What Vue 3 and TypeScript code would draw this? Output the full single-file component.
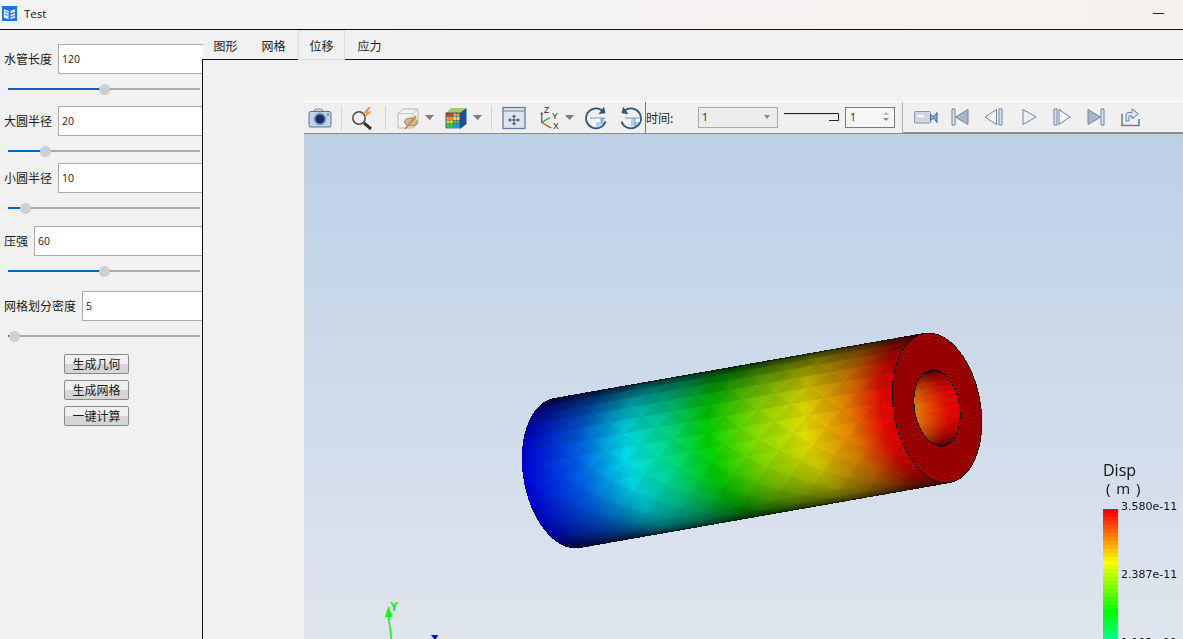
<script setup lang="ts">
import { onMounted, ref } from 'vue'

interface Field { label: string; value: string; percent: number }
type Rgb = [number, number, number]
type Vec = [number, number]

const fields: Field[] = [
  { label: '水管长度', value: '120', percent: 50 },
  { label: '大圆半径', value: '20', percent: 19.3 },
  { label: '小圆半径', value: '10', percent: 8.9 },
  { label: '压强', value: '60', percent: 50 },
  { label: '网格划分密度', value: '5', percent: 3.6 },
]
const tabs = ['图形', '网格', '位移', '应力']
const actions = ['生成几何', '生成网格', '一键计算']

const stops: [number, Rgb][] = [
  [0, [0, 0, 215]],
  [0.15, [0, 95, 230]],
  [0.28, [0, 220, 230]],
  [0.38, [0, 220, 150]],
  [0.5, [0, 210, 0]],
  [0.62, [125, 220, 0]],
  [0.76, [225, 220, 0]],
  [0.88, [230, 130, 0]],
  [0.97, [230, 10, 0]],
  [1, [230, 0, 0]],
]

function colormap(t: number): Rgb {
  for (let i = 1; i < stops.length; i++) {
    if (t <= stops[i][0]) {
      const [a, ca] = stops[i - 1]
      const [b, cb] = stops[i]
      const k = (t - a) / (b - a)
      return [0, 1, 2].map(n => ca[n] + (cb[n] - ca[n]) * k) as Rgb
    }
  }
  return stops[stops.length - 1][1]
}

// tube geometry in page coordinates, canvas sits at (304, 134)
const W = 879
const H = 505
const front: Vec = [937 - 304, 408 - 134]
const axis: Vec = [-370, 65]
const major: Vec = [-13, -75]
const minor: Vec = [43.3, -7.6]
const K = 0.1170
const detAxis = axis[0] * major[1] - axis[1] * major[0]
const detCap = major[0] * minor[1] - major[1] * minor[0]

function capRadius(x: number, y: number) {
  const dx = x - front[0]
  const dy = y - front[1]
  const a = (dx * minor[1] - dy * minor[0]) / detCap
  const b = (major[0] * dy - major[1] * dx) / detCap
  return Math.sqrt(a * a + b * b)
}

function wallColor(s: number, th: number): Rgb {
  const ns = 22
  const nt = 16
  const u = s * ns
  const v = (th / Math.PI) * nt
  const i = Math.floor(u)
  const j = Math.floor(v)
  const fu = u - i
  const fv = v - j
  // each quad is cut along one diagonal, alternating, which gives the diamond look of the mesh
  const k = (i + j) % 2 === 0 ? (fu > fv ? 0 : 1) : (fu + fv < 1 ? 0 : 1)
  const mid = ((j + 0.5) * Math.PI) / nt
  const smooth = Math.pow(Math.sin(th), 0.9)
  const flat = Math.pow(Math.sin(mid), 0.9)
  const light = 0.03 + 0.97 * (smooth * 0.6 + flat * 0.4)
  const c = colormap(Math.min(1, Math.max(0, s)))
  const f = light * (k === 0 ? 1 : 0.95)
  return [c[0] * f, c[1] * f, c[2] * f]
}

const tube = ref<HTMLCanvasElement | null>(null)

function paintTube() {
  const ctx = tube.value?.getContext('2d')
  if (!ctx) return
  const img = ctx.createImageData(W, H)
  const put = (x: number, y: number, c: Rgb) => {
    const o = (y * W + x) * 4
    img.data[o] = c[0]
    img.data[o + 1] = c[1]
    img.data[o + 2] = c[2]
    img.data[o + 3] = 255
  }
  for (let y = 150; y < H; y++) {
    for (let x = 200; x < 700; x++) {
      const px = x + 0.5
      const py = y + 0.5
      const rho = capRadius(px, py)
      const dx = px - front[0]
      const dy = py - front[1]
      const A = (dx * major[1] - dy * major[0]) / detAxis
      const B = (axis[0] * dy - axis[1] * dx) / detAxis
      if (rho <= 1) {
        const around = [capRadius(px + 1, py), capRadius(px - 1, py), capRadius(px, py + 1), capRadius(px, py - 1)]
        const edge = around.some(r => r > 1) || (rho >= 0.5 && around.some(r => r < 0.5))
        if (edge) {
          put(x, y, [0, 0, 0])
        } else if (rho >= 0.5) {
          put(x, y, [150, 0, 0])
        } else {
          const c = Math.min(1, Math.abs(B) / 0.5)
          const sin = Math.sqrt(1 - c * c)
          const th = Math.acos(Math.max(-1, Math.min(1, B / 0.5)))
          put(x, y, wallColor(Math.min(1, 1 - A - 0.5 * K * sin), th))
        }
      } else if (Math.abs(B) <= 1) {
        const sin = Math.sqrt(1 - B * B)
        const s = 1 - A + K * sin
        if (s >= 0 && s <= 1) put(x, y, wallColor(s, Math.acos(B)))
      }
    }
  }
  ctx.putImageData(img, 0, 0)
}

onMounted(paintTube)

// legend bands, top of the bar is the max value
const bands = Array.from({ length: 34 }, (_, i) => {
  const y = i * 4
  let c: Rgb
  if (y < 51) c = [255, Math.round((y / 51) * 255), 0]
  else if (y < 101) c = [Math.round((1 - (y - 51) / 50) * 255), 255, 0]
  else c = [0, 255, Math.round(((y - 101) / 50) * 255)]
  return `rgb(${c.join(',')})`
})

const cubeCells = Array.from({ length: 16 }, (_, i) => {
  const row = Math.floor(i / 4)
  const col = i % 4
  const palette = ['#e8352a', '#f09a28', '#ecdc30', '#3cc45a', '#2f8fe0']
  return { x: 2 + col * 3.5, y: 7 + row * 3.6, fill: palette[Math.min(4, row + (col > 1 ? 1 : 0))] }
})
</script>

<template>
  <div class="window">
    <header class="titlebar">
      <svg class="app-icon" viewBox="0 0 16 16">
        <rect width="16" height="16" fill="#1a73e8" />
        <path d="M2 3.500 7 5v9L2 12.500zM9 5l5-1.500v3L9 8zM9 9.200l5-1.500v2L9 11.200zM9 12.200l5-1.500v1.800L9 14z" fill="#dff0ff" />
        <path d="M3 6l3 .9M3 9l3 .9" stroke="#1a73e8" />
      </svg>
      <span class="app-name">Test</span>
      <span class="minimize" />
    </header>

    <div class="main">
      <aside class="panel">
        <div v-for="f in fields" :key="f.label" class="group">
          <div class="field-row">
            <label class="field-label">{{ f.label }}</label>
            <div class="field-input">{{ f.value }}</div>
          </div>
          <div class="slider">
            <div class="slider-fill" :style="{ width: f.percent + '%' }">
              <span class="slider-handle" />
            </div>
          </div>
        </div>
        <div class="actions">
          <button v-for="a in actions" :key="a" class="action">{{ a }}</button>
        </div>
      </aside>

      <section class="content">
        <nav class="tabs">
          <span v-for="t in tabs" :key="t" class="tab" :class="{ active: t === '位移' }">{{ t }}</span>
        </nav>
        <div class="pane">
          <div class="viewer">
            <div class="toolbar">
              <div class="tool-left">
                <svg class="tb m4" viewBox="0 0 24 24">
                  <path d="M6 5.500 7.500 3h6L15 5.500" fill="#cdd9e8" stroke="#6f8db3" />
                  <rect x="1" y="5.500" width="22" height="15.500" rx="2" fill="#c4d4e8" stroke="#54749f" />
                  <circle cx="12" cy="13" r="6.400" fill="#7f9cc4" />
                  <circle cx="12" cy="13" r="4.600" fill="#14305f" />
                  <circle cx="20" cy="8.500" r=".9" fill="#3d5f90" />
                </svg>
                <span class="sep m9" />
                <svg class="tb m8" viewBox="0 0 24 24">
                  <circle cx="9" cy="12" r="6.200" fill="#f4f4f4" stroke="#4a4a4a" stroke-width="1.500" />
                  <path d="m14 17 7 6" stroke="#333" stroke-width="3" />
                  <path d="M18.500 1 13 7.500h3.500l-2 4.500 7-6.500h-3.700l3-4.500z" fill="#e79a3c" />
                </svg>
                <span class="sep m11" />
                <svg class="tb m10" viewBox="0 0 24 24">
                  <path d="M2 7.500 7 3h15v14l-5 5H2z" fill="#f2f2f2" stroke="#b9b9b9" />
                  <path d="M2 7.500h15V22M17 7.500 22 3" fill="none" stroke="#c8c8c8" />
                  <ellipse cx="15" cy="16" rx="6.500" ry="4" fill="#cdbb85" stroke="#8c8c6c" />
                  <path d="m9 23 11-13" stroke="#de6a3a" stroke-width="1.200" />
                </svg>
                <span class="caret m5" />
                <svg class="tb m10" viewBox="0 0 24 24">
                  <path d="M2 7 7 2h15.500l-5 5z" fill="#9ccf70" />
                  <path d="m16 7 6.500-5v16l-6.500 5z" fill="#1d4f9e" />
                  <rect v-for="(c, i) in cubeCells" :key="i" :x="c.x" :y="c.y" width="3.500" height="3.600" :fill="c.fill" stroke="#3a4a5a" stroke-width=".3" />
                  <rect x="2" y="7" width="14" height="15" fill="none" stroke="#2c4a78" stroke-width=".7" />
                </svg>
                <span class="caret m5" />
                <span class="sep m9" />
                <svg class="tb m10" viewBox="0 0 24 24">
                  <rect x="1" y="1.500" width="22" height="21" fill="#dfe4ec" stroke="#647a99" stroke-width="1.300" />
                  <path d="M1 5h22" stroke="#647a99" />
                  <path d="M12 8.500 14 11h-4zM12 19.500 10 17h4zM6 14l2.500-2v4zM18 14l-2.500 2v-4z" fill="#3b4f6b" />
                  <path d="M8 14h8M12 10v8" stroke="#3b4f6b" />
                </svg>
                <svg class="tb m11" viewBox="0 0 24 24">
                  <path d="M4.700 16.500V7" stroke="#2f62b5" stroke-width="1.300" />
                  <path d="m3.300 8.500 1.400-3 1.400 3z" fill="#2f62b5" />
                  <path d="m4.700 16.500 8.300-5" stroke="#2a9a58" stroke-width="1.300" />
                  <path d="m4.700 16.500 9.300 5.500" stroke="#d23a3a" stroke-width="1.300" />
                  <text x="7" y="7" class="axis-letter">Z</text>
                  <text x="15" y="13" class="axis-letter">Y</text>
                  <text x="16" y="23" class="axis-letter">X</text>
                </svg>
                <span class="caret m4" />
                <svg class="tb m10" viewBox="0 0 24 24">
                  <path d="M12 12h9a9 9 0 0 1-9 9z" fill="#a9d3ef" />
                  <path d="M12 12h4v4h-4z" fill="#fff" />
                  <path d="M6 12h15.500M18 12v6" stroke="#5b8bb4" stroke-width=".8" fill="none" />
                  <path d="M21.500 15.500A10 10 0 1 1 18 4.300" fill="none" stroke="#2f567c" stroke-width="1.800" />
                  <path d="m14.500 8 7-.8L20 .8z" fill="#2f567c" />
                </svg>
                <svg class="tb m11" viewBox="0 0 24 24">
                  <g transform="matrix(-1 0 0 1 24 0)">
                    <path d="M21.500 15.500A10 10 0 1 1 18 4.300" fill="none" stroke="#2f567c" stroke-width="1.800" />
                    <path d="m14.500 8 7-.8L20 .8z" fill="#2f567c" />
                  </g>
                  <path d="M12 12h9a9 9 0 0 1-9 9z" fill="#a9d3ef" />
                  <path d="M16 12h5v4h-5z" fill="#fff" />
                  <path d="M6 12h15.500M16 12v8" stroke="#5b8bb4" stroke-width=".8" fill="none" />
                </svg>
                <span class="divider m2" />
                <span class="time-label">时间:</span>
                <div class="combo">1<span class="combo-arrow" /></div>
                <svg class="time-slider" viewBox="0 0 55 10">
                  <path d="M0 2.500h54.500v7H45" fill="none" stroke="#222" />
                  <path d="M0 3.500h53" stroke="#ddd" />
                </svg>
                <div class="spin">
                  1
                  <span class="spin-arrows"><i class="up" /><i class="down" /></span>
                </div>
                <span class="divider end" />
              </div>
              <div class="tool-right">
                <svg class="media m11" viewBox="0 0 24 24">
                  <rect x="0.500" y="6.500" width="16" height="11.500" rx="1" fill="#cfd7e2" stroke="#8296b0" />
                  <rect x="3" y="10" width="7" height="2.500" fill="#f2f4f7" />
                  <path d="M16.500 9.500 20 12l3-4.500v10L20 13l-3.500 2.500z" fill="#8fb8dc" stroke="#2f6498" />
                </svg>
                <svg class="media w18 m13" viewBox="0 0 18 24">
                  <path d="M1 4h3v16H1z" fill="#dde3ec" stroke="#6c86a8" />
                  <path d="M17 4.500v15L4.500 12z" fill="#a9b5c6" stroke="#6c86a8" />
                </svg>
                <svg class="media w19 m15" viewBox="0 0 19 24">
                  <path d="M1 12 12.500 4.500v15z" fill="#f0f2f6" stroke="#6c86a8" />
                  <path d="M15 4h3v16h-3z" fill="#dde3ec" stroke="#6c86a8" />
                </svg>
                <svg class="media w15 m19" viewBox="0 0 15 24">
                  <path d="M1 4.500 14 12 1 19.500z" fill="#f0f2f6" stroke="#6c86a8" />
                </svg>
                <svg class="media w18 m16" viewBox="0 0 18 24">
                  <path d="M1 4h3v16H1z" fill="#dde3ec" stroke="#6c86a8" />
                  <path d="M6 4.500 17 12 6 19.500z" fill="#f0f2f6" stroke="#6c86a8" />
                </svg>
                <svg class="media w18 m16" viewBox="0 0 18 24">
                  <path d="M1 4.500v15L13.500 12z" fill="#a9b5c6" stroke="#6c86a8" />
                  <path d="M14 4h3v16h-3z" fill="#dde3ec" stroke="#6c86a8" />
                </svg>
                <svg class="media w19 m16" viewBox="0 0 19 24">
                  <path d="M1 9v11.500h17V14" fill="none" stroke="#5f83ab" stroke-width="1.600" />
                  <path d="M5 16v-6c0-1.500 1-2.500 2.500-2.500H11V4l6.500 5L11 13.500V11H8v5z" fill="#dde6f0" stroke="#5f83ab" />
                </svg>
              </div>
            </div>

            <div class="scene">
              <canvas ref="tube" class="tube" width="879" height="505" />
              <svg class="triad" viewBox="304 134 879 505">
                <path d="M388.500 606 385 617h7z" fill="#00ff00" />
                <path d="M388.500 617 391.500 640" stroke="#00ff00" stroke-width="1.500" />
                <text x="390" y="611" class="axis-y">Y</text>
                <path d="M431 635h7l-2 4h-2z" fill="#0000ff" />
              </svg>
              <div class="legend">
                <div class="legend-title">Disp</div>
                <div class="legend-unit">( m )</div>
                <div class="legend-body">
                  <div class="legend-bar">
                    <span v-for="(b, i) in bands" :key="i" class="band" :style="{ background: b }" />
                  </div>
                  <div class="legend-values">
                    <span>3.580e-11</span>
                    <span>2.387e-11</span>
                    <span>1.193e-11</span>
                  </div>
                </div>
              </div>
            </div>
          </div>
        </div>
      </section>
    </div>
  </div>
</template>

<style>
html, body {
  margin: 0;
  height: 100%;
  overflow: hidden;
}
</style>

<style scoped>
.window {
  width: 1183px;
  height: 639px;
  display: flex;
  flex-direction: column;
  overflow: hidden;
  background: #f1f1f1;
  font-family: 'Noto Sans CJK SC', 'Noto Sans', sans-serif;
  font-size: 12px;
  color: #1a1a1a;
}

.titlebar {
  box-sizing: border-box;
  height: 30px;
  flex: none;
  display: flex;
  align-items: center;
  padding: 0 0 2px 2px;
  background: linear-gradient(90deg, #f4f4f4, #f5f1ee);
  border-bottom: 1px solid #111;
}
.app-icon {
  width: 15px;
  height: 15px;
}
.app-name {
  margin-left: 7px;
  font-family: 'Open Sans', sans-serif;
  font-size: 11.500px;
}
.minimize {
  margin-left: auto;
  margin-right: 19px;
  width: 11px;
  height: 1px;
  background: #222;
}

.main {
  flex: 1;
  display: flex;
  min-height: 0;
}

.panel {
  width: 203px;
  flex: none;
  overflow: hidden;
}
.group {
  padding-left: 4px;
}
.group:nth-child(1) { margin-top: 14px; }
.group:nth-child(2) { margin-top: 16px; }
.group:nth-child(3) { margin-top: 11px; }
.group:nth-child(4) { margin-top: 17px; }
.group:nth-child(5) { margin-top: 19px; }

.field-row {
  display: flex;
  align-items: center;
  gap: 6px;
  margin-right: -8px;
}
.field-label {
  white-space: nowrap;
  line-height: 30px;
}
.field-input {
  flex: 1;
  box-sizing: border-box;
  height: 30px;
  line-height: 28px;
  padding-left: 3px;
  background: #fff;
  border: 1px solid #a9a9a9;
  font-family: 'Open Sans', sans-serif;
  font-size: 10.500px;
}

.slider {
  position: relative;
  height: 2px;
  margin: 14px 3px 0 4px;
  background: #a9a9a9;
}
.slider-fill {
  position: relative;
  height: 2px;
  background: #0a63b8;
}
.slider-handle {
  position: absolute;
  right: -5.500px;
  top: -4.500px;
  width: 11px;
  height: 11px;
  border-radius: 50%;
  background: #cfcfcf;
}

.actions {
  margin-top: 17px;
  display: flex;
  flex-direction: column;
  align-items: center;
  gap: 6px;
  padding-right: 10px;
}
.action {
  width: 65px;
  height: 20px;
  padding: 0;
  box-sizing: border-box;
  border: 1px solid #8a8a8a;
  border-radius: 2px;
  background: linear-gradient(#f0f0f0 50%, #d6d6d6 50%);
  font-family: inherit;
  font-size: 12px;
  line-height: 16px;
  color: #1a1a1a;
}

.content {
  flex: 1;
  display: flex;
  flex-direction: column;
  min-width: 0;
}
.tabs {
  height: 29px;
  flex: none;
  display: flex;
  align-items: flex-end;
  margin-left: -2px;
  position: relative;
  z-index: 1;
}
.tab {
  box-sizing: border-box;
  width: 47px;
  height: 30px;
  margin-bottom: -1px;
  margin-left: 1px;
  text-align: center;
  line-height: 29px;
  border: 1px solid transparent;
}
.tab.active {
  border-color: #dcdcdc;
  background: #f1f1f1;
}

.pane {
  flex: 1;
  min-height: 0;
  display: flex;
  margin-left: -1px;
  padding: 41px 0 0 101px;
  border-left: 1px solid #111;
  border-top: 1px solid #111;
}
.viewer {
  flex: 1;
  min-width: 0;
  display: flex;
  flex-direction: column;
}

.toolbar {
  height: 33px;
  flex: none;
  display: flex;
  background: #f0f0f0;
}
.tool-left {
  box-sizing: border-box;
  width: 599px;
  flex: none;
  display: flex;
  align-items: center;
  border-top: 1px solid #fff;
  border-bottom: 1px solid #8c8c8c;
}
.tool-right {
  flex: 1;
  display: flex;
  align-items: center;
  box-sizing: border-box;
  border-top: 1px solid #fff;
  border-bottom: 2px solid #8c8c8c;
}
.tb {
  width: 24px;
  height: 24px;
  flex: none;
}
.media {
  width: 24px;
  height: 24px;
  flex: none;
}
.w15 { width: 15px; }
.w18 { width: 18px; }
.w19 { width: 19px; }
.m2 { margin-left: 2px; }
.m4 { margin-left: 4px; }
.m5 { margin-left: 5px; }
.m8 { margin-left: 8px; }
.m9 { margin-left: 9px; }
.m10 { margin-left: 10px; }
.m11 { margin-left: 11px; }
.m13 { margin-left: 13px; }
.m15 { margin-left: 15px; }
.m16 { margin-left: 16px; }
.m19 { margin-left: 19px; }
.sep {
  width: 1px;
  height: 24px;
  background: #d2d2d2;
  flex: none;
}
.divider {
  width: 1px;
  height: 31px;
  background: #777;
  flex: none;
}
.divider.end {
  margin-left: 7px;
  background: #b4b4b4;
}
.caret {
  width: 9px;
  height: 5px;
  flex: none;
  background: #7d7d7d;
  clip-path: polygon(0 0, 100% 0, 50% 100%);
}
.axis-letter {
  font-family: 'Liberation Sans', sans-serif;
  font-size: 8.500px;
  fill: #2b2b2b;
}

.time-label {
  width: 52px;
  flex: none;
}
.combo {
  box-sizing: border-box;
  position: relative;
  width: 80px;
  height: 21px;
  flex: none;
  padding-left: 3px;
  line-height: 19px;
  border: 1px solid #a9a9a9;
  background: #ececec;
  font-family: 'Open Sans', sans-serif;
  font-size: 10.500px;
}
.combo-arrow {
  position: absolute;
  right: 7px;
  top: 7px;
  border-left: 3px solid transparent;
  border-right: 3px solid transparent;
  border-top: 4px solid #8a8a8a;
}
.time-slider {
  width: 55px;
  height: 10px;
  flex: none;
  margin: -4px 0 0 6px;
}
.spin {
  box-sizing: border-box;
  position: relative;
  width: 50px;
  height: 21px;
  flex: none;
  margin-left: 6px;
  padding-left: 4px;
  line-height: 19px;
  border: 1px solid #7a7a7a;
  background: #f6f6f6;
  font-family: 'Open Sans', sans-serif;
  font-size: 10.500px;
}
.spin-arrows {
  position: absolute;
  right: 5px;
  top: 4px;
  display: flex;
  flex-direction: column;
  gap: 3px;
}
.spin-arrows i {
  width: 0;
  height: 0;
  border-left: 3px solid transparent;
  border-right: 3px solid transparent;
}
.spin-arrows .up { border-bottom: 3px solid #b5b5b5; }
.spin-arrows .down { border-top: 3px solid #8a8a8a; }

.scene {
  flex: 1;
  min-height: 0;
  position: relative;
  overflow: hidden;
  background: linear-gradient(#bdd0e6, #dfe5ee);
}
.tube,
.triad {
  position: absolute;
  left: 0;
  top: 0;
  width: 879px;
  height: 505px;
}
.axis-y {
  font-family: 'Liberation Sans', sans-serif;
  font-size: 12px;
  font-weight: 700;
  fill: #00ff00;
}
.legend {
  position: absolute;
  left: 799px;
  top: 326px;
  color: #111;
}
.legend-title {
  font-family: 'Open Sans', sans-serif;
  font-size: 16px;
  line-height: 20px;
}
.legend-unit {
  font-family: 'Open Sans', sans-serif;
  font-size: 15px;
  line-height: 16px;
  word-spacing: 2px;
  padding-left: 3px;
  margin-bottom: 13px;
}
.legend-body {
  display: flex;
  gap: 3px;
}
.legend-bar {
  width: 15px;
  display: flex;
  flex-direction: column;
}
.band {
  height: 4px;
}
.legend-values {
  display: flex;
  flex-direction: column;
  gap: 55px;
  margin-top: -9px;
  font-family: 'DejaVu Sans', sans-serif;
  font-size: 11px;
  line-height: 13px;
}
</style>
